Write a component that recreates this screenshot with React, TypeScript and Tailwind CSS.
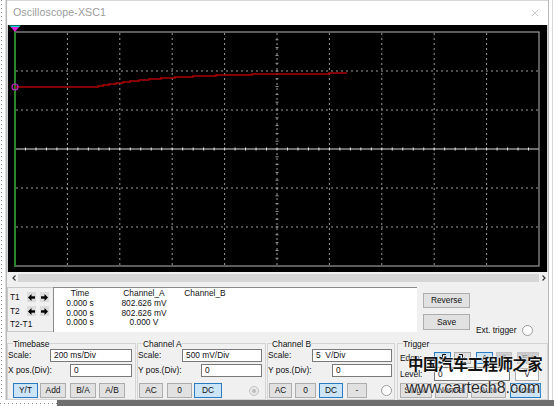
import React from "react";
import { X } from "lucide-react";

function Plot() {
  const vx = Array.from({ length: 9 }, (_, i) => 15 + 52.4 * (i + 1));
  const hy = [71, 110, 188, 227];
  const hTicks = Array.from({ length: 49 }, (_, i) => 15 + 10.48 * (i + 1));
  const vTicks = Array.from({ length: 29 }, (_, i) => 32 + 7.8 * (i + 1));
  const pts: string[] = ["15,87", "95,87"];
  let prev = 87;
  for (let x = 96; x <= 347; x++) {
    const y = Math.round(73 + 14 * Math.exp(-(x - 95) / 70));
    if (y !== prev) {
      pts.push(`${x},${prev}`);
      pts.push(`${x},${y}`);
      prev = y;
    }
  }
  pts.push(`347,${prev}`);
  return (
    <svg width="541" height="247" viewBox="7 25 541 247" className="block">
      <rect x="7" y="25" width="541" height="247" fill="#d4d4d4" />
      <rect x="8" y="25" width="539" height="247" fill="#000" />
      {vx.map((x, i) => (
        <line key={"v" + i} x1={x} y1="33" x2={x} y2="266" stroke="#9c9c9c" strokeWidth="1" strokeDasharray="2 3" />
      ))}
      {hy.map((y, i) => (
        <line key={"h" + i} x1="16" y1={y} x2="539" y2={y} stroke="#9c9c9c" strokeWidth="1" strokeDasharray="2 3" />
      ))}
      <line x1="16" y1="149" x2="539" y2="149" stroke="#d8d8d8" strokeWidth="1" />
      {hTicks.map((x, i) => (
        <line key={"ht" + i} x1={x} y1="147.5" x2={x} y2="150.5" stroke="#e8e8e8" strokeWidth="1" />
      ))}
      {vTicks.map((y, i) => (
        <line key={"vt" + i} x1="275.5" y1={y} x2="278.5" y2={y} stroke="#9c9c9c" strokeWidth="1" />
      ))}
      <rect x="15" y="32" width="524" height="234" fill="none" stroke="#9a9a9a" strokeWidth="1.2" />
      <line x1="15" y1="31" x2="15" y2="267" stroke="#1f8f1f" strokeWidth="1.6" />
      <polyline points={pts.join(" ")} fill="none" stroke="#b00000" strokeWidth="1.6" />
      <circle cx="15" cy="87" r="3" fill="none" stroke="#d020d0" strokeWidth="1.2" />
      <polygon points="9,25.5 21,25.5 15,30" fill="#19d3d3" />
      <polygon points="11,27 19,27 15,32" fill="#e020e0" />
    </svg>
  );
}

function Btn({
  w,
  ml,
  h,
  sel = false,
  dis = false,
  children,
}: {
  w: string;
  ml: string;
  h: string;
  sel?: boolean;
  dis?: boolean;
  children: React.ReactNode;
}) {
  const tone = sel
    ? "bg-[#cce4f7] border-[#2a7bc4]"
    : dis
    ? "bg-[#cccccc] border-[#c4c4c4] text-[#8e8e8e]"
    : "bg-[#e1e1e1] border-[#adadad]";
  return (
    <div className={`${w} ${ml} ${h} ${tone} border flex items-center justify-center shrink-0 leading-none`}>
      {children}
    </div>
  );
}

function Input({ w, h, children }: { w: string; h: string; children?: React.ReactNode }) {
  return (
    <div className={`${w} ${h} shrink-0 bg-white border border-[#7a7a7a] pl-[3px] flex items-center leading-none`}>
      {children}
    </div>
  );
}

function Arrow({ dir }: { dir: "l" | "r" }) {
  return (
    <div className="w-[9px] h-[10px] bg-[#dcdcdc] flex items-center justify-center shrink-0">
      <svg width="7" height="7" viewBox="0 0 7 7">
        {dir === "l" ? (
          <g fill="#000">
            <polygon points="0,3.5 3.5,0 3.5,7" />
            <rect x="3" y="2.3" width="4" height="2.4" />
          </g>
        ) : (
          <g fill="#000">
            <polygon points="7,3.5 3.5,0 3.5,7" />
            <rect x="0" y="2.3" width="4" height="2.4" />
          </g>
        )}
      </svg>
    </div>
  );
}

function Edge({ up }: { up: boolean }) {
  return (
    <svg width="9" height="9" viewBox="0 0 9 9">
      {up ? (
        <g fill="none" stroke="#000" strokeWidth="1">
          <polyline points="1,8.5 4.5,8.5 4.5,0.5 8,0.5" />
          <polyline points="2.5,5.5 4.5,3.5 6.5,5.5" />
        </g>
      ) : (
        <g fill="none" stroke="#000" strokeWidth="1">
          <polyline points="1,0.5 4.5,0.5 4.5,8.5 8,8.5" />
          <polyline points="2.5,3.5 4.5,5.5 6.5,3.5" />
        </g>
      )}
    </svg>
  );
}

function Radio({ ml, dis = false }: { ml: string; dis?: boolean }) {
  return dis ? (
    <div className={`${ml} w-[10px] h-[10px] rounded-full border border-[#c4c4c4] bg-[#e8e8e8] flex items-center justify-center shrink-0`}>
      <div className="w-[4px] h-[4px] rounded-full bg-[#bdbdbd]" />
    </div>
  ) : (
    <div className={`${ml} w-[11px] h-[11px] rounded-full border border-[#9a9a9a] bg-white shrink-0`} />
  );
}

export default function App() {
  return (
    <div className="w-[554px] h-[406px] overflow-hidden bg-white flex flex-col relative font-['Liberation_Sans',Arial,sans-serif] text-[8.4px] text-[#111]">
      <div className="flex h-[400px]">
        {/* left canvas strip */}
        <div className="w-[7px] h-[400px] flex bg-white">
          <div className="w-[1px]" />
          <div className="w-[1px] h-full bg-[repeating-linear-gradient(to_bottom,#8a8a8a_0px,#8a8a8a_1px,transparent_1px,transparent_4px)]" />
          <div className="w-[3px]" />
          <div className="w-[1px] h-full bg-[#dedede]" />
          <div className="w-[1px] h-full bg-[#b8b8b8]" />
        </div>

        {/* window */}
        <div className="w-[541px] h-[400px] flex flex-col">
          <div className="h-[25px] bg-white border-t border-[#d6d6d6] flex items-center justify-between pl-[6px] pr-[7px]">
            <span className="text-[10.6px] text-[#9a9a9a] font-['Liberation_Sans',Arial,sans-serif] tracking-[0.1px]">Oscilloscope-XSC1</span>
            <X size={12} strokeWidth={1} color="#9a9a9a" />
          </div>

          <Plot />

          {/* scrollbar */}
          <div className="h-[11px] bg-[#f0f0f0] pt-[2px] flex">
            <div className="w-[11px] h-[8px] flex items-center justify-center pl-[2px]">
              <svg width="4" height="6" viewBox="0 0 4 6">
                <polyline points="3.5,0.5 1,3 3.5,5.5" fill="none" stroke="#333" strokeWidth="1.2" />
              </svg>
            </div>
            <div className="flex-1 h-[8px] bg-[#d6d6d6]" />
            <div className="w-[9px] h-[8px] flex items-center justify-center">
              <svg width="4" height="6" viewBox="0 0 4 6">
                <polyline points="0.5,0.5 3,3 0.5,5.5" fill="none" stroke="#333" strokeWidth="1.2" />
              </svg>
            </div>
          </div>

          {/* control panel */}
          <div className="h-[117px] bg-[#f0f0f0] flex flex-col">
            {/* cursor readouts */}
            <div className="mt-[4px] h-[45px] flex">
              <div className="w-[46px] h-[45px] border-l border-t border-b border-[#c8c8c8] flex flex-col pt-[2px]">
                <div className="h-[14px] flex items-center">
                  <span className="w-[19px] pl-[2px]">T1</span>
                  <Arrow dir="l" />
                  <div className="w-[4px]" />
                  <Arrow dir="r" />
                </div>
                <div className="h-[14px] flex items-center">
                  <span className="w-[19px] pl-[2px]">T2</span>
                  <Arrow dir="l" />
                  <div className="w-[4px]" />
                  <Arrow dir="r" />
                </div>
                <div className="h-[13px] flex items-center">
                  <span className="pl-[2px]">T2-T1</span>
                </div>
              </div>
              <div className="w-[364px] h-[45px] bg-white border-t border-l border-[#8a8a8a] pt-[1px] flex leading-[9.8px]">
                <div className="w-[52px] flex flex-col items-center">
                  <span>Time</span>
                  <span>0.000 s</span>
                  <span>0.000 s</span>
                  <span>0.000 s</span>
                </div>
                <div className="w-[76px] flex flex-col items-center">
                  <span>Channel_A</span>
                  <span>802.626 mV</span>
                  <span>802.626 mV</span>
                  <span>0.000 V</span>
                </div>
                <div className="w-[46px] flex flex-col items-center">
                  <span>Channel_B</span>
                </div>
              </div>
              <div className="ml-[6px] w-[47px] flex flex-col">
                <div className="mt-[6px] h-[15px] bg-[#e1e1e1] border border-[#adadad] flex items-center justify-center leading-none">Reverse</div>
                <div className="mt-[6px] h-[16px] bg-[#e1e1e1] border border-[#adadad] flex items-center justify-center leading-none">Save</div>
              </div>
              <div className="ml-[6px] mt-[38px] h-[10px] flex items-center">
                <span className="leading-none">Ext. trigger</span>
                <Radio ml="ml-[5px]" />
              </div>
            </div>

            {/* groups */}
            <div className="mt-[11px] h-[57px] flex">
              {/* Timebase */}
              <div className="w-[129px] h-[57px] border border-[#d4d4d4] flex flex-col">
                <div className="ml-[5px] -mt-[5px] h-[10px] leading-[10px] w-fit bg-[#f0f0f0]">Timebase</div>
                <div className="h-[13px] flex items-center">
                  <span className="w-[42px]">Scale:</span>
                  <Input w="w-[82px]" h="h-[13px]">200 ms/Div</Input>
                </div>
                <div className="mt-[2px] h-[13px] flex items-center">
                  <span className="w-[62px]">X pos.(Div):</span>
                  <Input w="w-[62px]" h="h-[13px]">0</Input>
                </div>
                <div className="mt-[6px] h-[15px] flex">
                  <Btn w="w-[25px]" ml="ml-[5px]" h="h-[15px]" sel>Y/T</Btn>
                  <Btn w="w-[26px]" ml="ml-[2px]" h="h-[15px]">Add</Btn>
                  <Btn w="w-[26px]" ml="ml-[4px]" h="h-[15px]">B/A</Btn>
                  <Btn w="w-[26px]" ml="ml-[3px]" h="h-[15px]">A/B</Btn>
                </div>
              </div>

              {/* Channel A */}
              <div className="ml-[1px] w-[129px] h-[57px] border border-[#d4d4d4] flex flex-col">
                <div className="ml-[5px] -mt-[5px] h-[10px] leading-[10px] w-fit bg-[#f0f0f0]">Channel A</div>
                <div className="h-[13px] flex items-center">
                  <span className="w-[44px]">Scale:</span>
                  <Input w="w-[80px]" h="h-[13px]">500 mV/Div</Input>
                </div>
                <div className="mt-[2px] h-[13px] flex items-center">
                  <span className="w-[63px]">Y pos.(Div):</span>
                  <Input w="w-[61px]" h="h-[13px]">0</Input>
                </div>
                <div className="mt-[6px] h-[15px] flex items-center">
                  <Btn w="w-[24px]" ml="ml-[1px]" h="h-[15px]">AC</Btn>
                  <Btn w="w-[25px]" ml="ml-[4px]" h="h-[15px]">0</Btn>
                  <Btn w="w-[28px]" ml="ml-[2px]" h="h-[15px]" sel>DC</Btn>
                  <Radio ml="ml-[27px]" dis />
                </div>
              </div>

              {/* Channel B */}
              <div className="ml-[1px] w-[128px] h-[57px] border border-[#d4d4d4] flex flex-col">
                <div className="ml-[4px] -mt-[5px] h-[10px] leading-[10px] w-fit bg-[#f0f0f0]">Channel B</div>
                <div className="h-[13px] flex items-center">
                  <span className="w-[44px]">Scale:</span>
                  <Input w="w-[80px]" h="h-[13px]">5&nbsp; V/Div</Input>
                </div>
                <div className="mt-[2px] h-[13px] flex items-center">
                  <span className="w-[64px]">Y pos.(Div):</span>
                  <Input w="w-[60px]" h="h-[13px]">0</Input>
                </div>
                <div className="mt-[6px] h-[15px] flex items-center">
                  <Btn w="w-[23px]" ml="ml-[1px]" h="h-[15px]">AC</Btn>
                  <Btn w="w-[21px]" ml="ml-[3px]" h="h-[15px]">0</Btn>
                  <Btn w="w-[24px]" ml="ml-[3px]" h="h-[15px]" sel>DC</Btn>
                  <Btn w="w-[20px]" ml="ml-[4px]" h="h-[15px]">-</Btn>
                  <Radio ml="ml-[14px]" />
                </div>
              </div>

              {/* Trigger */}
              <div className="ml-[2px] w-[151px] h-[57px] border border-[#d4d4d4] flex flex-col">
                <div className="ml-[5px] -mt-[5px] h-[10px] leading-[10px] w-fit bg-[#f0f0f0]">Trigger</div>
                <div className="mt-[3px] h-[12px] flex items-center">
                  <span className="w-[36px] pl-[2px]">Edge:</span>
                  <Btn w="w-[17px]" ml="ml-0" h="h-[12px]" sel><Edge up /></Btn>
                  <Btn w="w-[17px]" ml="ml-[3px]" h="h-[12px]"><Edge up={false} /></Btn>
                  <Btn w="w-[17px]" ml="ml-[5px]" h="h-[12px]" sel>A</Btn>
                  <Btn w="w-[16px]" ml="ml-[3px]" h="h-[12px]" dis>B</Btn>
                  <Btn w="w-[22px]" ml="ml-[5px]" h="h-[12px]" dis>Ext</Btn>
                </div>
                <div className="mt-[3px] h-[14px] flex items-center">
                  <span className="w-[36px] pl-[2px]">Level:</span>
                  <Input w="w-[76px]" h="h-[14px]">0</Input>
                  <div className="ml-[5px] w-[24px] h-[13px] bg-white border border-[#adadad] flex items-center justify-center leading-none">V</div>
                </div>
                <div className="mt-[2px] h-[15px] flex items-center">
                  <Btn w="w-[32px]" ml="ml-[2px]" h="h-[15px]">Single</Btn>
                  <Btn w="w-[33px]" ml="ml-[3px]" h="h-[15px]">Normal</Btn>
                  <Btn w="w-[35px]" ml="ml-[3px]" h="h-[15px]">Auto</Btn>
                  <Btn w="w-[31px]" ml="ml-[4px]" h="h-[15px]" sel>None</Btn>
                </div>
              </div>
            </div>
          </div>
        </div>

        {/* right strip */}
        <div className="w-[6px] h-[400px] bg-white flex">
          <div className="w-[1px] h-full bg-[#b8b8b8]" />
          <div className="w-[3px]" />
          <div className="w-[1px] h-full bg-[#d6d6d6]" />
        </div>
      </div>

      {/* bottom strip */}
      <div className="h-[6px] flex">
        <div className="w-[57px] h-[6px] bg-white flex flex-col">
          <div className="h-[3px]" />
          <div className="h-[1px] bg-[repeating-linear-gradient(to_right,#8a8a8a_0px,#8a8a8a_1px,transparent_1px,transparent_4px)]" />
        </div>
        <div className="flex-1 h-[6px] bg-[#6e6e6e]" />
      </div>

      {/* watermark overlay */}
      <div className="absolute left-[408px] top-[356px] text-[15.5px] leading-none font-bold text-[#111] tracking-[-0.6px] font-['Noto_Sans_CJK_SC','Noto_Sans_CJK_JP',sans-serif] [text-shadow:0_0_2px_#fff,0_0_2px_#fff]">
        中国汽车工程师之家
      </div>
      <div className="absolute left-[406px] top-[380px] text-[16px] leading-none text-[#2a2a2a] font-['Liberation_Sans',Arial,sans-serif] [text-shadow:0_0_2px_#fff,0_0_1px_#fff]">
        www.cartech8.com
      </div>
    </div>
  );
}
